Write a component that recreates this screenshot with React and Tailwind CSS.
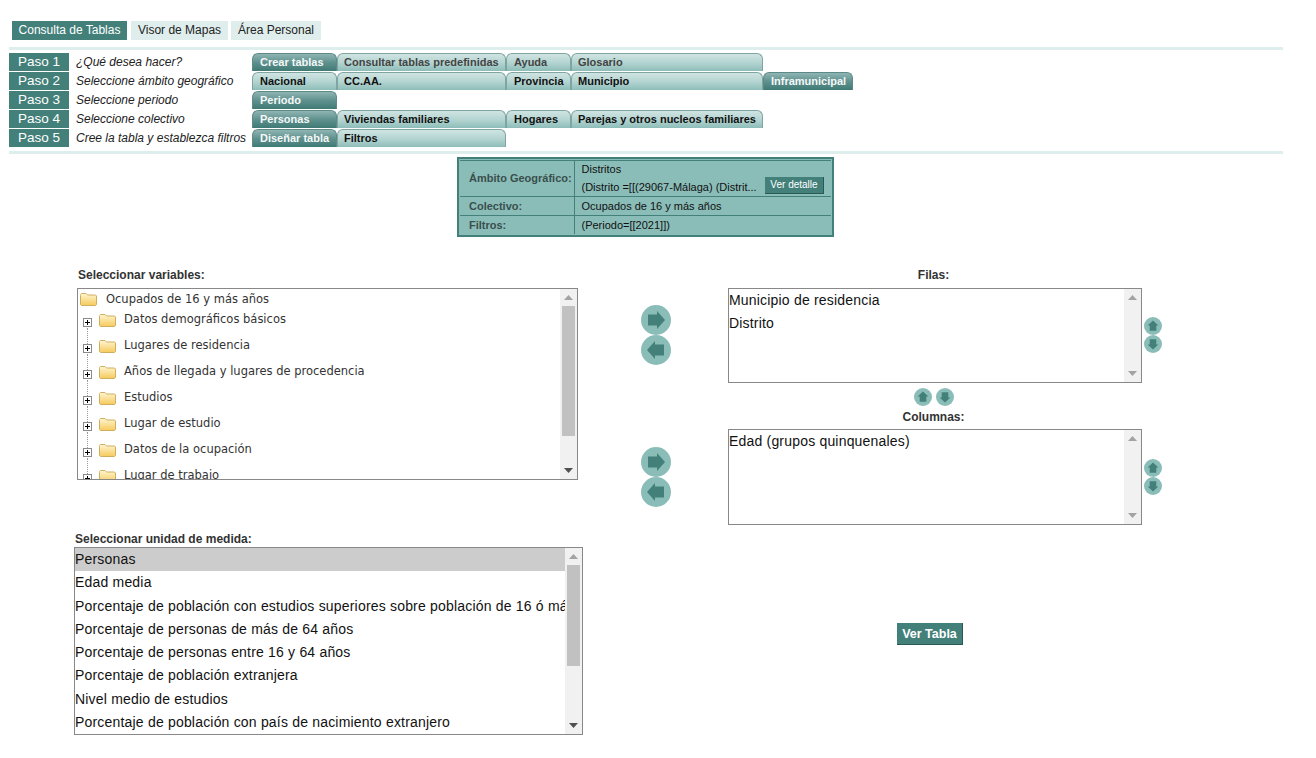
const pasos = [
  {
    n: 'Paso 1',
    label: '¿Qué desea hacer?',
    tabs: [
      ['Crear tablas', 85, 'on'],
      ['Consultar tablas predefinidas', 169, 'dim'],
      ['Ayuda', 65, 'dim'],
      ['Glosario', 192, 'dim'],
    ],
  },
  {
    n: 'Paso 2',
    label: 'Seleccione ámbito geográfico',
    tabs: [
      ['Nacional', 85, 'off'],
      ['CC.AA.', 169, 'off'],
      ['Provincia', 65, 'off'],
      ['Municipio', 192, 'off'],
      ['Inframunicipal', 90, 'on'],
    ],
  },
  { n: 'Paso 3', label: 'Seleccione periodo', tabs: [['Periodo', 85, 'on']] },
  {
    n: 'Paso 4',
    label: 'Seleccione colectivo',
    tabs: [
      ['Personas', 85, 'on'],
      ['Viviendas familiares', 169, 'off'],
      ['Hogares', 65, 'off'],
      ['Parejas y otros nucleos familiares', 192, 'off'],
    ],
  },
  {
    n: 'Paso 5',
    label: 'Cree la tabla y establezca filtros',
    tabs: [
      ['Diseñar tabla', 85, 'on'],
      ['Filtros', 169, 'off'],
    ],
  },
];

const tree = [
  'Datos demográficos básicos',
  'Lugares de residencia',
  'Años de llegada y lugares de procedencia',
  'Estudios',
  'Lugar de estudio',
  'Datos de la ocupación',
  'Lugar de trabajo',
];

const medidas = [
  'Personas',
  'Edad media',
  'Porcentaje de población con estudios superiores sobre población de 16 ó más años',
  'Porcentaje de personas de más de 64 años',
  'Porcentaje de personas entre 16 y 64 años',
  'Porcentaje de población extranjera',
  'Nivel medio de estudios',
  'Porcentaje de población con país de nacimiento extranjero',
];

function Tab({ text, width, kind, wide }) {
  const colors = {
    on: 'from-[#8fb5b3] via-[#5f918e] to-[#3f7a75] text-[#f4f8f8] border-[#5d8a87]',
    off: 'from-[#cfe4e2] via-[#b5d5d2] to-[#8dbdb9] text-[#111] border-[#7fa5a1]',
    dim: 'from-[#cfe4e2] via-[#b5d5d2] to-[#8dbdb9] text-[#444] border-[#7fa5a1]',
  };
  return (
    <div
      style={{ width }}
      className={`h-[18px] shrink-0 rounded-t-[6px] border-t border-x bg-gradient-to-b text-[11px] leading-[17px] font-bold whitespace-nowrap ${wide ? 'pl-[7px]' : 'pl-[6px]'} ${colors[kind]}`}
    >
      {text}
    </div>
  );
}

function Triangle({ up, color }) {
  return (
    <svg width="9" height="5" viewBox="0 0 9 5">
      <path d={up ? 'M4.5 0L9 5H0z' : 'M0 0h9L4.5 5z'} fill={color} />
    </svg>
  );
}

function Scrollbar({ thumbTop, thumbHeight, active }) {
  const col = active ? '#505050' : '#a3a3a3';
  return (
    <div className="relative flex h-full w-[17px] shrink-0 flex-col items-center justify-between bg-[#f1f1f1] py-[6px]">
      <Triangle up color="#a3a3a3" />
      {thumbHeight > 0 && (
        <div
          style={{ top: thumbTop, height: thumbHeight }}
          className="absolute left-[2px] w-[13px] bg-[#c1c1c1]"
        />
      )}
      <Triangle color={col} />
    </div>
  );
}

function Folder() {
  return (
    <svg width="17" height="13" viewBox="0 0 17 13" className="shrink-0">
      <defs>
        <linearGradient id="fold" x1="0" y1="0" x2="0" y2="1">
          <stop offset="0" stopColor="#fff6d2" />
          <stop offset="1" stopColor="#f6c95c" />
        </linearGradient>
      </defs>
      <path
        d="M.5 2.5v-1l1-1h4.5l1.5 1.5h8l1 1v8.5l-1 1h-14l-1-1z"
        fill="url(#fold)"
        stroke="#cfae5e"
      />
    </svg>
  );
}

function Plus() {
  return (
    <svg width="9" height="9" viewBox="0 0 9 9" className="shrink-0">
      <rect x=".5" y=".5" width="8" height="8" fill="#fff" stroke="#8a8a8a" />
      <path d="M2 4.5h5M4.5 2v5" stroke="#000" />
    </svg>
  );
}

function RoundArrow({ dir, size }) {
  const paths = {
    right: 'M7 9.5h9V6l8 9-8 9v-3.5H7z',
    left: 'M23 9.5h-9V6l-8 9 8 9v-3.5h9z',
    up: 'M9.5 23v-9H6l9-8 9 8h-3.5v9z',
    down: 'M9.5 7v9H6l9 8 9-8h-3.5V7z',
  };
  return (
    <button className="block shrink-0 cursor-pointer">
      <svg width={size} height={size} viewBox="0 0 30 30" className="block">
        <circle cx="15" cy="15" r="15" fill="#8abdb8" />
        <path d={paths[dir]} fill="#43807a" />
      </svg>
    </button>
  );
}

function ListBox({ items, height }) {
  return (
    <div
      style={{ height }}
      className="flex w-[414px] border border-[#888] bg-white text-[14px] tracking-[0.19px] text-[#111]"
    >
      <div className="min-w-0 flex-1 pt-[1px]">
        {items.map((item) => (
          <div key={item} className="h-[23.3px] leading-[21px]">
            {item}
          </div>
        ))}
      </div>
      <Scrollbar thumbHeight={0} />
    </div>
  );
}

function ListWithMoves({ items, height, moveTop }) {
  return (
    <div className="flex items-start">
      <ListBox items={items} height={height} />
      <div style={{ marginTop: moveTop }} className="ml-[2px] flex flex-col">
        <RoundArrow dir="up" size={18} />
        <RoundArrow dir="down" size={18} />
      </div>
    </div>
  );
}

function ArrowPair() {
  return (
    <div className="flex flex-col">
      <RoundArrow dir="right" size={30} />
      <RoundArrow dir="left" size={30} />
    </div>
  );
}

export default function App() {
  return (
    <div className="min-h-[758px] bg-white pt-[21px] font-['Liberation_Sans',Arial,sans-serif] text-[#222]">
      <nav className="flex h-[19px] pl-[12px] text-[12px] leading-[18px]">
        <a className="w-[115px] bg-[#43807a] text-center text-white">Consulta de Tablas</a>
        <a className="ml-[4px] w-[97px] bg-[#dfeeed] text-center">Visor de Mapas</a>
        <a className="ml-[3px] w-[90px] bg-[#dfeeed] text-center">Área Personal</a>
      </nav>

      <div className="mx-[9px] mt-[7px] h-[3px] w-[1274px] bg-[#deeeec]" />

      <div className="mt-[3px] ml-[9px] flex flex-col gap-[1px]">
        {pasos.map((p) => (
          <div key={p.n} className="flex h-[18px]">
            <div className="w-[60px] shrink-0 bg-[#43807a] text-center text-[13.5px] leading-[18px] text-white">
              {p.n}
            </div>
            <div className="w-[183px] shrink-0 pl-[7px] text-[12px] leading-[18px] whitespace-nowrap italic">
              {p.label}
            </div>
            {p.tabs.map(([text, width, kind], i) => (
              <Tab key={text} text={text} width={width} kind={kind} wide={i % 2 === 0} />
            ))}
          </div>
        ))}
      </div>

      <div className="mx-[9px] mt-[4px] h-[3px] w-[1274px] bg-[#deeeec]" />

      {/* resumen de la consulta */}
      <div className="mt-[3px] ml-[457px] h-[80px] w-[377px] border-2 border-[#43807a] bg-[#8abdb8] p-[1px] text-[11px]">
        <table className="w-full border-collapse">
          <tbody>
            <tr className="h-[36px] border-t border-b border-[#43807a]">
              <td className="w-[114px] border-r border-[#43807a] pl-[9px] font-bold text-[#3a4f4d]">
                Ámbito Geográfico:
              </td>
              <td className="pl-[7px] text-[#111]">
                <div className="h-[17px] leading-[15px]">Distritos</div>
                <div className="flex h-[17px] items-start justify-between pr-[7px]">
                  <span className="leading-[17px]">(Distrito =[[(29067-Málaga) (Distrit...</span>
                  <button className="-mt-[2px] h-[17px] w-[59px] border-r border-b border-[#2a5a55] bg-[#43807a] text-[10px] leading-[15px] text-white">
                    Ver detalle
                  </button>
                </div>
              </td>
            </tr>
            <tr className="h-[19px] border-b border-[#43807a]">
              <td className="border-r border-[#43807a] pl-[9px] font-bold text-[#3a4f4d]">Colectivo:</td>
              <td className="pl-[7px] text-[#111]">Ocupados de 16 y más años</td>
            </tr>
            <tr className="h-[18px]">
              <td className="border-r border-[#43807a] pl-[9px] font-bold text-[#3a4f4d]">Filtros:</td>
              <td className="pl-[7px] text-[#111]">(Periodo=[[2021]])</td>
            </tr>
          </tbody>
        </table>
      </div>

      <div className="mt-[31px] flex pl-[74px]">
        {/* columna izquierda */}
        <div className="w-[509px] shrink-0">
          <h3 className="ml-[4px] h-[14px] text-[12px] leading-[14px] font-bold text-[#333]">
            Seleccionar variables:
          </h3>
          <div className="mt-[6px] ml-[3px] flex h-[192px] w-[501px] border border-[#888] font-['DejaVu_Sans',sans-serif] text-[11.5px] text-[#333]">
            <div className="min-w-0 flex-1 overflow-hidden pt-[2px] pl-[2px]">
              <div className="flex h-[17px] items-center">
                <Folder />
                <span className="ml-[9px]">Ocupados de 16 y más años</span>
              </div>
              <div className="pt-[4px]">
                {tree.map((t, i) => (
                  <div key={t} className="relative flex h-[26px] items-start">
                    <div className="mt-[6px] ml-[3px] flex items-center">
                      <Plus />
                    </div>
                    <div className="mt-[2px] mr-[8px] ml-[7px]">
                      <Folder />
                    </div>
                    <span className="leading-[15px] whitespace-nowrap">{t}</span>
                    {i < 6 && (
                      <div className="absolute top-[16px] left-[7px] h-[16px] border-l border-dotted border-[#999]" />
                    )}
                  </div>
                ))}
              </div>
            </div>
            <Scrollbar thumbTop={17} thumbHeight={130} active />
          </div>

          <h3 className="mt-[52px] ml-[1px] h-[14px] text-[12px] leading-[14px] font-bold text-[#333]">
            Seleccionar unidad de medida:
          </h3>
          <div className="mt-[1px] flex h-[188px] w-[509px] border border-[#888] text-[14px] tracking-[0.19px] text-[#111]">
            <div className="min-w-0 flex-1 overflow-hidden">
              {medidas.map((m, i) => (
                <div
                  key={m}
                  className={`h-[23.3px] leading-[23px] whitespace-nowrap ${i === 0 ? 'bg-[#cccccc]' : ''}`}
                >
                  {m}
                </div>
              ))}
            </div>
            <Scrollbar thumbTop={17} thumbHeight={101} active />
          </div>
        </div>

        {/* flechas centrales */}
        <div className="ml-[58px] flex w-[29px] shrink-0 flex-col gap-[82px] pt-[37px]">
          <ArrowPair />
          <ArrowPair />
        </div>

        {/* filas y columnas */}
        <div className="ml-[58px] w-[436px] shrink-0">
          <h3 className="h-[14px] w-[411px] text-center text-[12px] leading-[14px] font-bold text-[#333]">
            Filas:
          </h3>
          <div className="mt-[6px]">
            <ListWithMoves items={['Municipio de residencia', 'Distrito']} height={95} moveTop={29} />
          </div>
          <div className="mt-[5px] flex w-[412px] justify-center gap-[4px]">
            <RoundArrow dir="up" size={18} />
            <RoundArrow dir="down" size={18} />
          </div>
          <h3 className="mt-[4px] h-[14px] w-[411px] text-center text-[12px] leading-[14px] font-bold text-[#333]">
            Columnas:
          </h3>
          <div className="mt-[5px]">
            <ListWithMoves items={['Edad (grupos quinquenales)']} height={96} moveTop={30} />
          </div>
          <button className="mt-[98px] ml-[169px] block h-[22px] w-[66px] border-r border-b border-[#2a5a55] bg-[#43807a] text-[12.5px] leading-[20px] font-bold text-white">
            Ver Tabla
          </button>
        </div>
      </div>
    </div>
  );
}
